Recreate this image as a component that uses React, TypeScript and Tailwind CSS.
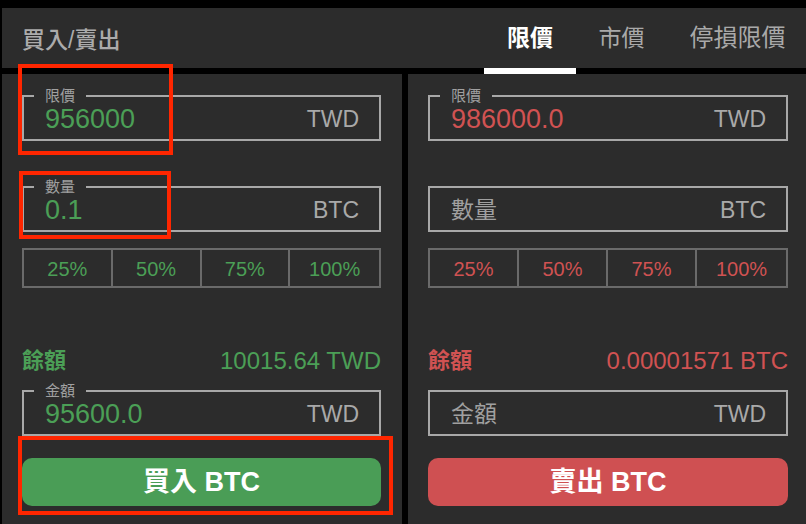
import React from "react";

type Side = "buy" | "sell";

const FONT = "font-['Liberation_Sans','Noto_Sans_CJK_TC',sans-serif]";

interface FieldProps {
  label: string;
  value?: string;
  unit: string;
  side: Side;
  className?: string;
}

function Field({ label, value, unit, side, className = "" }: FieldProps) {
  const valueColor = side === "buy" ? "text-[#4b9f56]" : "text-[#d05252]";
  return (
    <div
      className={`relative h-[46px] border-2 border-[#a8a8a8] flex items-center justify-between pl-[21px] pr-5 pt-[3px] ${className}`}
    >
      {value ? (
        <>
          {/* leyenda sobre el borde */}
          <span className="absolute -top-[10px] left-[10px] px-[11px] bg-[#2c2c2c] text-[15px] leading-[18px] text-[#a0a0a0]">
            {label}
          </span>
          <span className={`text-[27px] leading-none ${valueColor}`}>{value}</span>
        </>
      ) : (
        <span className="text-[23px] leading-none text-[#a0a0a0]">{label}</span>
      )}
      <span className="text-[23px] leading-none text-[#a9a9a9]">{unit}</span>
    </div>
  );
}

interface PanelProps {
  side: Side;
  price: string;
  amount?: string;
  total?: string;
  balance: string;
  action: string;
  className?: string;
}

function TradePanel({ side, price, amount, total, balance, action, className = "" }: PanelProps) {
  const text = side === "buy" ? "text-[#4b9f56]" : "text-[#d05252]";
  const btn = side === "buy" ? "bg-[#4a9d56]" : "bg-[#cf5052]";
  return (
    <div className={`bg-[#2c2c2c] pt-[21px] flex flex-col ${className}`}>
      <Field label="限價" value={price} unit="TWD" side={side} />
      <Field label="數量" value={amount} unit="BTC" side={side} className="mt-[45px]" />

      <div className="mt-4 h-[40px] grid grid-cols-4 border-2 border-[#6a6a6a] divide-x-2 divide-[#6a6a6a]">
        {["25%", "50%", "75%", "100%"].map((p) => (
          <div key={p} className={`flex items-center justify-center pt-[1px] text-[20px] leading-none ${text}`}>
            {p}
          </div>
        ))}
      </div>

      <div className={`mt-[58px] h-[30px] flex items-center justify-between ${text}`}>
        <span className="text-[22px] leading-none font-bold">餘額</span>
        <span className="text-[24px] leading-none">{balance}</span>
      </div>

      <Field label="金額" value={total} unit="TWD" side={side} className="mt-[14px]" />

      <button
        className={`mt-[22px] h-[48px] rounded-[10px] text-white font-bold text-[27px] leading-none ${btn}`}
      >
        {action}
      </button>
    </div>
  );
}

export default function App() {
  return (
    <div className={`relative w-[806px] h-[524px] bg-black pt-2 pl-[2px] flex flex-col overflow-hidden ${FONT}`}>
      {/* Cabecera */}
      <div className="h-[60px] bg-[#2c2c2c] flex items-center">
        <div className="pl-5 pt-[4px] text-[23px] leading-none font-medium text-[#ababab]">買入/賣出</div>
        <div className="ml-auto flex h-full items-center text-[23px] leading-none">
          <div className="w-[92px] text-center text-white font-semibold">限價</div>
          <div className="w-[91px] text-center text-[#a9a9a9]">市價</div>
          <div className="w-[139px] pl-[2px] text-center text-[24px] text-[#a9a9a9]">停損限價</div>
        </div>
      </div>
      <div className="h-[6px] flex justify-end">
        <div className="w-[92px] bg-white" />
        <div className="w-[230px]" />
      </div>

      {/* Paneles */}
      <div className="flex-1 flex gap-[6px]">
        <TradePanel
          side="buy"
          price="956000"
          amount="0.1"
          total="95600.0"
          balance="10015.64 TWD"
          action="買入 BTC"
          className="w-[400px] pl-5 pr-[21px]"
        />
        <TradePanel
          side="sell"
          price="986000.0"
          balance="0.00001571 BTC"
          action="賣出 BTC"
          className="flex-1 pl-5 pr-[18px]"
        />
      </div>

      {/* Marcas de anotación */}
      <div className="absolute left-[18px] top-[64px] w-[155px] h-[91px] border-4 border-[#ff2600]" />
      <div className="absolute left-[19px] top-[171px] w-[152px] h-[68px] border-4 border-[#ff2600]" />
      <div className="absolute left-[18px] top-[436px] w-[375px] h-[79px] border-4 border-[#ff2600]" />
    </div>
  );
}
